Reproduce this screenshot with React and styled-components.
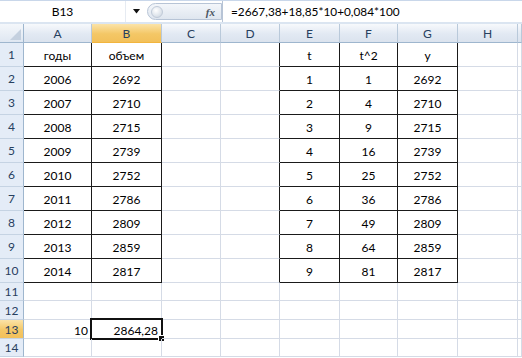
import React from "react";
import styled, { createGlobalStyle, css } from "styled-components";

const Global = createGlobalStyle`
  html, body { margin: 0; padding: 0; background: #fff; overflow: hidden; }
  body { font-family: Lato, "Open Sans", sans-serif; }
`;

const Page = styled.div`
  width: 522px;
  height: 358px;
  display: flex;
  flex-direction: column;
  background: #fff;
  overflow: hidden;
`;

const FormulaBar = styled.div`
  display: flex;
  align-items: stretch;
  background: #fff;
  border-top: 1px solid #c9d7ea;
  border-bottom: 2px solid #dbe5f1;
  box-sizing: border-box;
  height: 24px;
  flex: none;
`;

const NameBox = styled.div`
  width: 126px;
  display: flex;
  align-items: center;
  justify-content: center;
  font-size: 12px;
  color: #000;
  border-right: 1px solid #e6ebf2;
  box-sizing: border-box;
`;

const Drop = styled.div`
  width: 21px;
  display: flex;
  align-items: center;
  justify-content: center;
`;

const FxPill = styled.div`
  width: 75px;
  margin: 2px 0;
  border: 1px solid #b7c4d6;
  border-radius: 10px 0 0 10px;
  background: linear-gradient(#f3f6fa, #dfe6ef);
  display: flex;
  align-items: center;
  justify-content: space-between;
  padding: 0 6px 0 3px;
  box-sizing: border-box;
`;

const Knob = styled.div`
  width: 12px;
  height: 12px;
  border-radius: 50%;
  background: radial-gradient(circle at 40% 35%, #ffffff, #c8d2de);
  border: 1px solid #c0cad8;
  box-sizing: border-box;
`;

const Fx = styled.span`
  font-family: "Liberation Serif", serif;
  font-style: italic;
  font-weight: bold;
  font-size: 11px;
  color: #4a5563;
`;

const Formula = styled.div`
  flex: 1;
  display: flex;
  align-items: center;
  padding-left: 8px;
  font-size: 11.8px;
  color: #000;
  border-left: 1px solid #b7c4d6;
`;

const Grid = styled.div`
  display: grid;
  grid-template-columns: 24px 68px 70px 59px 59px 60px 58px 60px 60px 1fr;
  grid-template-rows: 19px repeat(10, 24px) 18px 19px 19px 18px 1fr;
  flex: 1;
`;

const Corner = styled.div`
  background: linear-gradient(#f4f7fb, #dfe7f2);
  border-right: 1px solid #9eb6ce;
  border-bottom: 1px solid #9eb6ce;
  box-sizing: border-box;
  position: relative;
  overflow: hidden;
  &::after {
    content: "";
    position: absolute;
    right: 2px;
    bottom: 2px;
    border-style: solid;
    border-width: 0 0 11px 11px;
    border-color: transparent transparent #c4d0df transparent;
  }
`;

const ColHead = styled.div`
  display: flex;
  align-items: center;
  justify-content: center;
  font-size: 12px;
  box-sizing: border-box;
  border-right: 1px solid #b9c9da;
  border-bottom: 1px solid #9eb6ce;
  color: #27405f;
  background: ${(p) =>
    p.$sel
      ? "linear-gradient(#fbe3a8, #f4c766 55%, #f2c05a)"
      : "linear-gradient(#f7f9fc, #e2e9f3 55%, #dbe3ee)"};
  ${(p) => p.$sel && css`border-bottom-color: #f2b53d;`}
`;

const RowHead = styled.div`
  display: flex;
  align-items: center;
  justify-content: center;
  font-size: 12px;
  box-sizing: border-box;
  border-right: 1px solid #9eb6ce;
  border-bottom: 1px solid #c5d3e3;
  color: #27405f;
  background: ${(p) =>
    p.$sel ? "linear-gradient(#fbe3a8, #f4c766 55%, #f2c05a)" : "#e4ecf7"};
`;

const Cell = styled.div`
  display: flex;
  align-items: center;
  justify-content: ${(p) => (p.$right ? "flex-end" : "center")};
  padding: ${(p) => (p.$right ? "2px 3px 0 0" : "2px 0 0 0")};
  font-size: 12px;
  color: #000;
  box-sizing: border-box;
  border-right: 1px solid ${(p) => (p.$br ? "#1a1a1a" : "#d5dbe6")};
  border-bottom: 1px solid ${(p) => (p.$bb ? "#1a1a1a" : "#d5dbe6")};
  position: relative;
  ${(p) =>
    p.$active &&
    css`
      &::before {
        content: "";
        position: absolute;
        left: -2px;
        top: -2px;
        right: -2px;
        bottom: -2px;
        border: 2px solid #111;
        pointer-events: none;
      }
      &::after {
        content: "";
        position: absolute;
        right: -4px;
        bottom: -4px;
        width: 5px;
        height: 5px;
        background: #111;
        border: 1px solid #fff;
      }
    `}
`;

const cols = ["A", "B", "C", "D", "E", "F", "G", "H", "I"];

const data = {
  1: { A: "годы", B: "объем", E: "t", F: "t^2", G: "y" },
};
const years = [2006, 2007, 2008, 2009, 2010, 2011, 2012, 2013, 2014];
const vals = [2692, 2710, 2715, 2739, 2752, 2786, 2809, 2859, 2817];
years.forEach((y, i) => {
  data[i + 2] = {
    A: String(y),
    B: String(vals[i]),
    E: String(i + 1),
    F: String((i + 1) * (i + 1)),
    G: String(vals[i]),
  };
});
data[13] = { A: "10", B: "2864,28" };

const inBox = (c, r) => {
  if (r < 1 || r > 10) return false;
  return c === "A" || c === "B" || c === "E" || c === "F" || c === "G";
};

export default function App() {
  const rows = Array.from({ length: 14 }, (_, i) => i + 1);
  return (
    <Page>
      <Global />
      <FormulaBar>
        <NameBox>B13</NameBox>
        <Drop>
          <svg width="8" height="5" viewBox="0 0 8 5">
            <path d="M0 0 H7 L3.5 4.5 Z" fill="#111" />
          </svg>
        </Drop>
        <FxPill>
          <Knob />
          <Fx>fx</Fx>
        </FxPill>
        <Formula>=2667,38+18,85*10+0,084*100</Formula>
      </FormulaBar>
      <Grid>
        <Corner />
        {cols.map((c) => (
          <ColHead key={c} $sel={c === "B"}>
            {c === "I" ? "" : c}
          </ColHead>
        ))}
        {rows.map((r) => (
          <React.Fragment key={r}>
            <RowHead $sel={r === 13}>{r}</RowHead>
            {cols.map((c, ci) => {
              const next = cols[ci + 1];
              const br = inBox(c, r) || (next && inBox(next, r));
              const bb = inBox(c, r) || inBox(c, r + 1);
              const v = (data[r] && data[r][c]) || "";
              return (
                <Cell
                  key={c}
                  $br={br}
                  $bb={bb}
                  $right={r === 13}
                  $active={r === 13 && c === "B"}
                >
                  {v}
                </Cell>
              );
            })}
          </React.Fragment>
        ))}
      </Grid>
    </Page>
  );
}
